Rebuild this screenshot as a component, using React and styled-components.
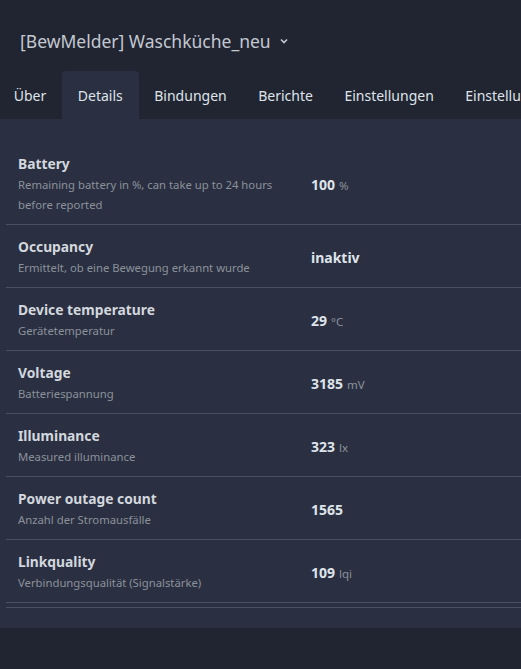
import React from 'react';
import styled, { createGlobalStyle } from 'styled-components';

const GlobalStyle = createGlobalStyle`
  html, body {
    margin: 0;
    padding: 0;
    background: #212531;
    overflow: hidden;
  }
  body {
    font-family: "Noto Sans", "Open Sans", sans-serif;
    color: #d6dae2;
  }
`;

const Page = styled.div`
  width: 521px;
  height: 669px;
  background: #212531;
  overflow: hidden;
`;

const Header = styled.div`
  height: 71px;
  display: flex;
  align-items: flex-start;
  padding: 28px 0 0 20px;
  box-sizing: border-box;
`;

const DeviceTitle = styled.h1`
  margin: 0;
  font-size: 17.5px;
  font-weight: 400;
  line-height: 26px;
  color: #c3c8d1;
  display: flex;
  align-items: center;
  gap: 8px;
  white-space: nowrap;
`;

const Tabs = styled.nav`
  display: flex;
  height: 48px;
  margin-left: -2px;
  white-space: nowrap;
`;

const Tab = styled.div`
  padding: 0 15.75px;
  display: flex;
  align-items: center;
  font-size: 14px;
  color: #dfe3ea;
  border-radius: 4px 4px 0 0;
  background: ${p => (p.$active ? '#2a3041' : 'transparent')};
  flex-shrink: 0;
`;

const Card = styled.section`
  background: #2a3041;
  padding: 23px 0 20px 6px;
`;

const Row = styled.div`
  display: grid;
  grid-template-columns: 293px 1fr;
  align-items: center;
  border-bottom: 1px solid #4a5061;
  padding: 11px 0 9px 12px;
`;

const Spacer = styled.div`
  height: 4px;
  border-bottom: 1px solid #4a5061;
`;

const Title = styled.div`
  font-size: 13.8px;
  font-weight: 700;
  line-height: 22px;
  color: #d3d7de;
`;

const Desc = styled.div`
  font-size: 11.3px;
  line-height: 20px;
  color: #8b909b;
  max-width: 262px;
`;

const Value = styled.div`
  font-size: 14px;
  font-weight: 700;
  color: #dfe3ea;
  margin-bottom: -1px;
`;

const Unit = styled.span`
  font-size: 11.5px;
  font-weight: 400;
  color: #8b909b;
  margin-left: 4px;
`;

const Chevron = () => (
  <svg width="10" height="10" viewBox="0 0 10 10">
    <path d="M2 3.5 L5 6.5 L8 3.5" fill="none" stroke="#c3c8d1" strokeWidth="1.6" />
  </svg>
);

const tabs = ['Über', 'Details', 'Bindungen', 'Berichte', 'Einstellungen', 'Einstellungen (spezifisch)'];

const rows = [
  { title: 'Battery', desc: 'Remaining battery in %, can take up to 24 hours before reported', value: '100', unit: '%' },
  { title: 'Occupancy', desc: 'Ermittelt, ob eine Bewegung erkannt wurde', value: 'inaktiv' },
  { title: 'Device temperature', desc: 'Gerätetemperatur', value: '29', unit: '°C' },
  { title: 'Voltage', desc: 'Batteriespannung', value: '3185', unit: 'mV' },
  { title: 'Illuminance', desc: 'Measured illuminance', value: '323', unit: 'lx' },
  { title: 'Power outage count', desc: 'Anzahl der Stromausfälle', value: '1565' },
  { title: 'Linkquality', desc: 'Verbindungsqualität (Signalstärke)', value: '109', unit: 'lqi' },
];

export default function App() {
  return (
    <Page>
      <GlobalStyle />
      <Header>
        <DeviceTitle>
          [BewMelder] Waschküche_neu <Chevron />
        </DeviceTitle>
      </Header>
      <Tabs>
        {tabs.map(t => (
          <Tab key={t} $active={t === 'Details'}>{t}</Tab>
        ))}
      </Tabs>
      <Card>
        {rows.map(r => (
          <Row key={r.title}>
            <div>
              <Title>{r.title}</Title>
              <Desc>{r.desc}</Desc>
            </div>
            <Value>
              {r.value}
              {r.unit && <Unit>{r.unit}</Unit>}
            </Value>
          </Row>
        ))}
        <Spacer />
      </Card>
    </Page>
  );
}
